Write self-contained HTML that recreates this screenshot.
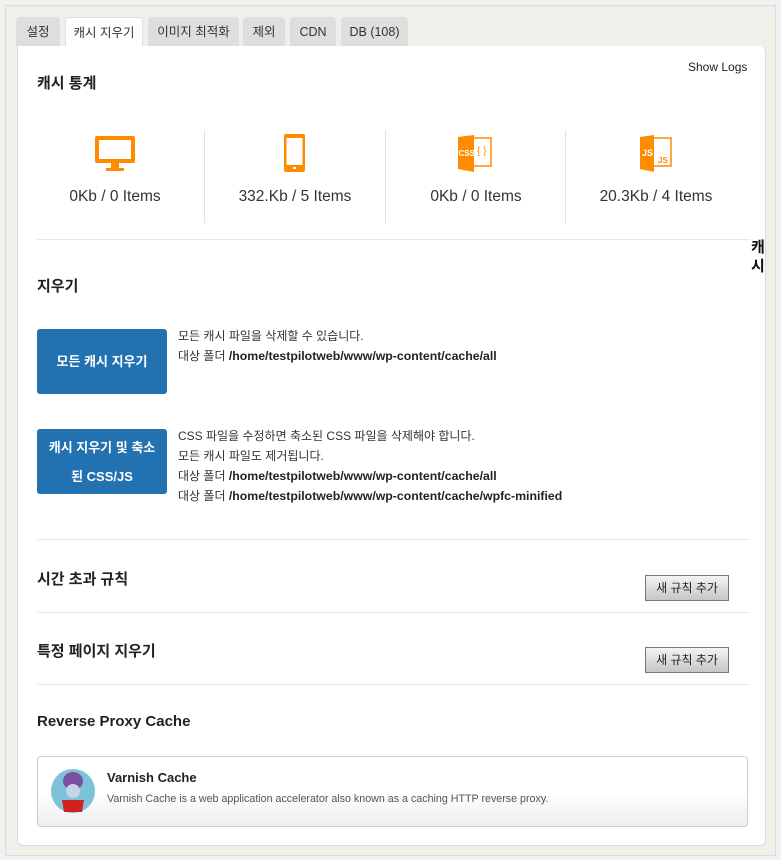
<!DOCTYPE html>
<html><head><meta charset="utf-8"><style>
*{box-sizing:border-box;margin:0;padding:0}
body{width:781px;height:860px;background:#f1f1f1;font-family:"Liberation Sans","Noto Sans CJK KR",sans-serif;color:#333;position:relative;overflow:hidden}
.outer{position:absolute;left:5px;top:5px;width:771px;height:851px;background:#f0efea;border:1px solid #dcdcd6}
.panel{position:absolute;left:17px;top:46px;width:749px;height:800px;background:#fff;border:1px solid #dcdcd6;border-top:none;border-radius:0 6px 6px 6px}
.tab{position:absolute;top:17px;height:29px;background:#dedede;border-radius:4px 4px 0 0;font-size:12.5px;line-height:30px;text-align:center;color:#333}
.tab.a{background:#fff;height:30px;border:1px solid #e2e2dc;border-bottom:none;z-index:2}
.a0{position:absolute}
h3{position:absolute;font-size:15px;font-weight:bold;color:#222}
.stat{position:absolute;top:188px;width:180px;text-align:center;font-size:15.5px;color:#333}
.vl{position:absolute;top:130px;width:1px;height:93px;background:#e2e2e2}
.hl{position:absolute;left:37px;width:713px;height:1px;background:#e6e6e6}
.btn{position:absolute;left:37px;width:130px;background:#2271b1;color:#fff;border-radius:3px;font-size:13px;font-weight:bold;text-align:center}
.desc{position:absolute;left:178px;font-size:12px;line-height:20px;color:#333}
.desc b{color:#222;font-size:12.3px}
.gb{position:absolute;left:645px;width:84px;height:26px;border:1px solid #777;background:linear-gradient(#f4f4f4,#c6c6c6);font-size:12px;line-height:24px;text-align:center;color:#222}
</style></head><body>
<div class="outer"></div>
<div class="tab" style="left:16px;width:44px">설정</div>
<div class="tab a" style="left:65px;width:78px">캐시 지우기</div>
<div class="tab" style="left:148px;width:91px">이미지 최적화</div>
<div class="tab" style="left:243px;width:42px">제외</div>
<div class="tab" style="left:290px;width:46px">CDN</div>
<div class="tab" style="left:341px;width:67px">DB (108)</div>
<div class="panel"></div>
<h3 style="left:37px;top:72px">캐시 통계</h3>
<div class="a0" style="left:688px;top:60px;font-size:12px;color:#222">Show Logs</div>
<svg class="a0" style="left:94px;top:135px" width="42" height="37" viewBox="0 0 42 37"><rect x="1" y="1" width="40" height="27" rx="2" fill="#ff8c00"/><rect x="5" y="5" width="32" height="19" fill="#fff"/><rect x="17" y="28" width="8" height="6" fill="#ff8c00"/><rect x="12" y="33" width="18" height="3" fill="#ff8c00"/></svg>
<svg class="a0" style="left:284px;top:134px" width="21" height="38" viewBox="0 0 21 38"><rect x="0" y="0" width="21" height="38" rx="2" fill="#ff8c00"/><rect x="2.5" y="4" width="16" height="27" fill="#fff"/><rect x="9" y="33" width="3" height="2" fill="#fff"/></svg>
<svg class="a0" style="left:456px;top:134px" width="38" height="38" viewBox="0 0 38 38"><rect x="17" y="4" width="18" height="28" fill="#fff" stroke="#ff8c00" stroke-width="1.5"/><path d="M2 3L18 1V38L2 35Z" fill="#ff8c00"/><text x="2.5" y="22" font-size="8" font-weight="bold" fill="#fff" font-family="Liberation Sans">CSS</text><text x="21" y="20" font-size="10" fill="#ff8c00" font-family="Liberation Sans">{ }</text></svg>
<svg class="a0" style="left:638px;top:134px" width="36" height="38" viewBox="0 0 36 38"><rect x="15" y="4" width="18" height="28" fill="#fff" stroke="#ff8c00" stroke-width="1.5"/><path d="M2 3L16 1V38L2 35Z" fill="#ff8c00"/><text x="4" y="22" font-size="9" font-weight="bold" fill="#fff" font-family="Liberation Sans">JS</text><text x="20" y="29" font-size="8" font-weight="bold" fill="#ff8c00" font-family="Liberation Sans">JS</text></svg>
<div class="stat" style="left:25px">0Kb / 0 Items</div>
<div class="stat" style="left:205px">332.Kb / 5 Items</div>
<div class="stat" style="left:386px">0Kb / 0 Items</div>
<div class="stat" style="left:566px">20.3Kb / 4 Items</div>
<div class="vl" style="left:204px"></div><div class="vl" style="left:385px"></div><div class="vl" style="left:565px"></div>
<div class="hl" style="top:239px"></div>
<div class="a0" style="left:751px;top:238px;font-size:15px;font-weight:bold;line-height:19px;width:16px;color:#111">캐<br>시</div>
<h3 style="left:37px;top:275px">지우기</h3>
<div class="btn" style="top:329px;height:65px;line-height:65px">모든 캐시 지우기</div>
<div class="desc" style="top:326px">모든 캐시 파일을 삭제할 수 있습니다.<br>대상 폴더 <b>/home/testpilotweb/www/wp-content/cache/all</b></div>
<div class="btn" style="top:429px;height:65px;line-height:29px;padding-top:4px">캐시 지우기 및 축소<br>된 CSS/JS</div>
<div class="desc" style="top:426px">CSS 파일을 수정하면 축소된 CSS 파일을 삭제해야 합니다.<br>모든 캐시 파일도 제거됩니다.<br>대상 폴더 <b>/home/testpilotweb/www/wp-content/cache/all</b><br>대상 폴더 <b>/home/testpilotweb/www/wp-content/cache/wpfc-minified</b></div>
<div class="hl" style="top:539px"></div>
<h3 style="left:37px;top:568px">시간 초과 규칙</h3>
<div class="gb" style="top:575px">새 규칙 추가</div>
<div class="hl" style="top:612px"></div>
<h3 style="left:37px;top:640px">특정 페이지 지우기</h3>
<div class="gb" style="top:647px">새 규칙 추가</div>
<div class="hl" style="top:684px"></div>
<h3 style="left:37px;top:713px">Reverse Proxy Cache</h3>
<div class="a0" style="left:37px;top:756px;width:711px;height:71px;border:1px solid #ccc;border-radius:4px;background:linear-gradient(#fff 50%,#eee)"></div>
<svg class="a0" style="left:50px;top:768px" width="46" height="46" viewBox="0 0 46 46"><circle cx="23" cy="23" r="22" fill="#7cc3da"/><ellipse cx="23" cy="13" rx="10" ry="9" fill="#7a4fa0"/><circle cx="23" cy="23" r="7" fill="#c8d3ea"/><path d="M12 32L34 32L32 44L14 44Z" fill="#d32020"/></svg>
<div class="a0" style="left:107px;top:770px;font-size:13px;font-weight:bold;color:#222">Varnish Cache</div>
<div class="a0" style="left:107px;top:793px;font-size:10.7px;color:#555">Varnish Cache is a web application accelerator also known as a caching HTTP reverse proxy.</div>
</body></html>
